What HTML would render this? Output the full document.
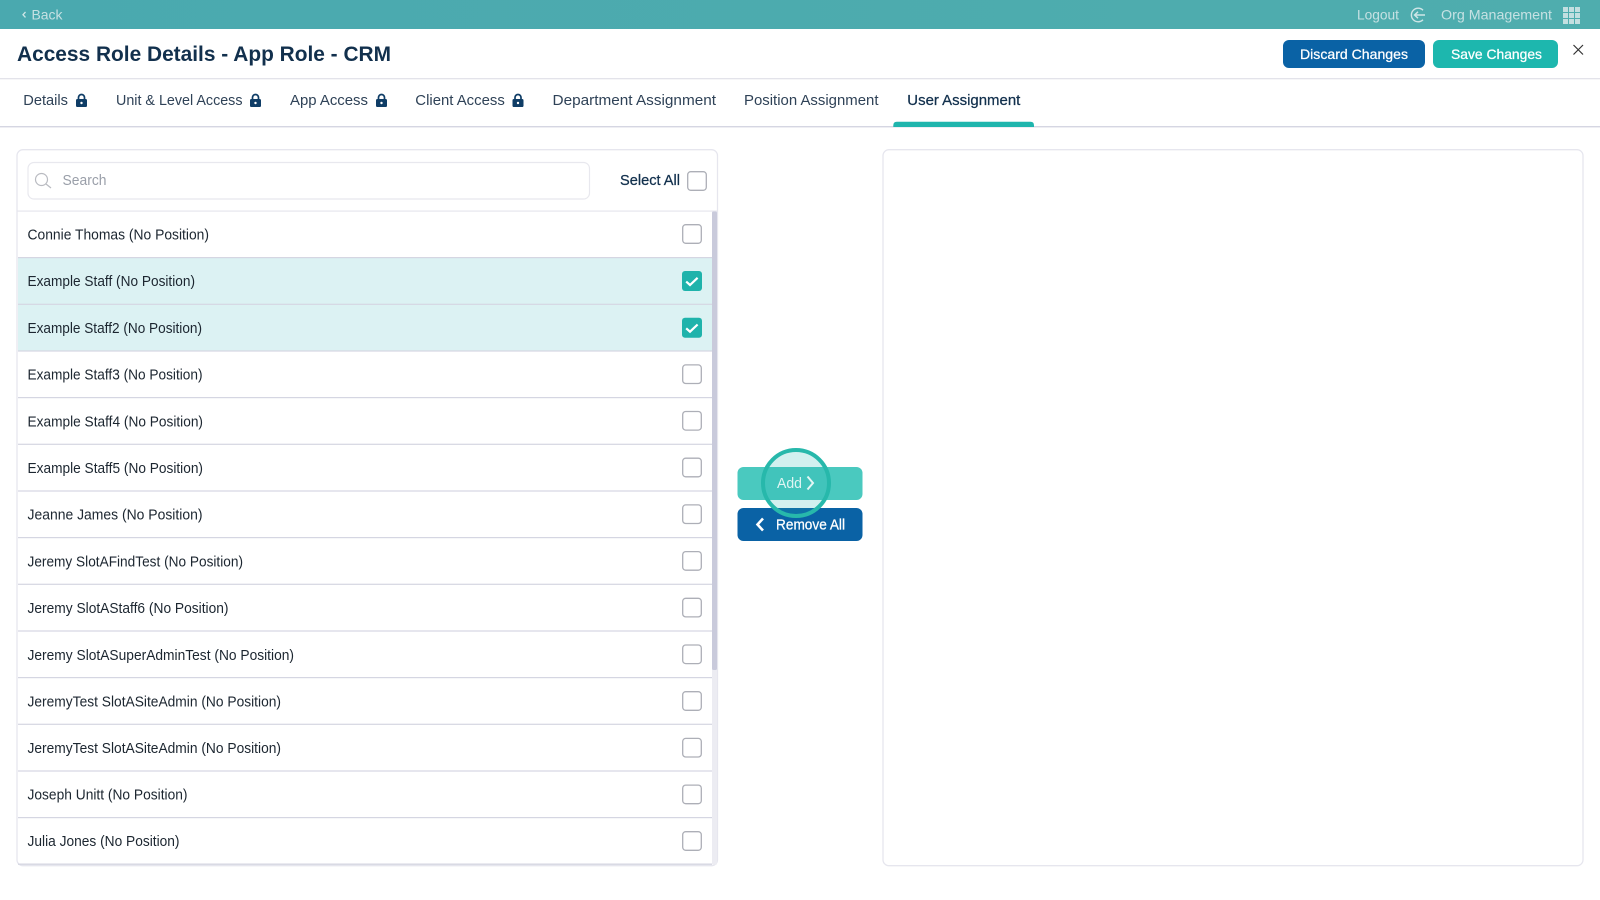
<!DOCTYPE html>
<html><head><meta charset="utf-8"><title>Access Role Details</title>
<style>
html,body{margin:0;padding:0;background:#fff;width:1600px;height:900px;overflow:hidden}
svg{display:block}
text{font-family:"Liberation Sans",sans-serif}
.r{font-size:14.5px;fill:#1c2630}
.t{font-size:15px;fill:#2f4257}
.m{stroke-width:.25}
</style></head><body>
<svg width="1600" height="900" viewBox="0 0 1600 900" xmlns="http://www.w3.org/2000/svg">
<defs>
<linearGradient id="g" x1="0" y1="0" x2="1" y2="0"><stop offset="0" stop-color="#4aa9af"/><stop offset="1" stop-color="#4fadae"/></linearGradient>
<g id="lock"><rect x="0" y="5" width="11" height="8" rx="1.4" fill="#0f3d66"/><path d="M2.5 5.5V3.5a3 3 0 0 1 6 0V5.5" fill="none" stroke="#0f3d66" stroke-width="1.7"/><circle cx="5.5" cy="9" r="1.2" fill="#fff"/></g>
<g id="cb"><rect x=".7" y=".7" width="18.6" height="18.6" rx="3" fill="#fff" stroke="#adafb7" stroke-width="1.3"/></g>
<g id="cc"><rect width="20" height="20" rx="3" fill="#1fb3ab"/><path d="M4.2 10.6 8 14 15.6 6.8" fill="none" stroke="#fff" stroke-width="2.2"/></g>
</defs>

<!-- top bar -->
<rect width="1600" height="29" fill="url(#g)"/>
<path d="M25.5 12 23 14.7 25.5 17.4" fill="none" stroke="#cfe6e7" stroke-width="1.3"/>
<text x="31.5" y="19.3" font-size="14" fill="#c6e1e3" textLength="31" lengthAdjust="spacingAndGlyphs">Back</text>
<text x="1357" y="19.3" font-size="14" fill="#c6e1e3" textLength="42" lengthAdjust="spacingAndGlyphs">Logout</text>
<path d="M1423 10.2A6.8 6.8 0 1 0 1423 19.8" fill="none" stroke="#cfe6e7" stroke-width="1.4"/>
<path d="M1425 15H1414.5M1418 11.8 1414.5 15 1418 18.2" fill="none" stroke="#cfe6e7" stroke-width="1.4"/>
<text x="1441" y="19.3" font-size="14" fill="#c6e1e3" textLength="111" lengthAdjust="spacingAndGlyphs">Org Management</text>
<g fill="#c3dfe0">
<rect x="1563" y="7" width="5" height="5"/><rect x="1569" y="7" width="5" height="5"/><rect x="1575" y="7" width="5" height="5"/>
<rect x="1563" y="13" width="5" height="5"/><rect x="1569" y="13" width="5" height="5"/><rect x="1575" y="13" width="5" height="5"/>
<rect x="1563" y="19" width="5" height="5"/><rect x="1569" y="19" width="5" height="5"/><rect x="1575" y="19" width="5" height="5"/>
</g>

<!-- title -->
<text x="17" y="61" font-size="21" font-weight="700" fill="#12304d" textLength="374" lengthAdjust="spacingAndGlyphs">Access Role Details - App Role - CRM</text>
<rect x="1283" y="40" width="142" height="28" rx="6" fill="#0a62a5"/>
<text x="1300" y="59" font-size="14" fill="#fff" stroke="#fff" class="m" textLength="108" lengthAdjust="spacingAndGlyphs">Discard Changes</text>
<rect x="1433" y="40" width="125" height="28" rx="6" fill="#1db7ae"/>
<text x="1451" y="59" font-size="14" fill="#fff" stroke="#fff" class="m" textLength="91" lengthAdjust="spacingAndGlyphs">Save Changes</text>
<path d="M1573.5 45 1583 54.5M1583 45 1573.5 54.5" stroke="#333" stroke-width="1.2" fill="none"/>
<rect y="78" width="1600" height="1.3" fill="#e3e3ea"/>

<!-- tabs -->
<text class="t" x="23.3" y="105.2" textLength="44.7" lengthAdjust="spacingAndGlyphs">Details</text>
<use href="#lock" x="76" y="94"/>
<text class="t" x="116" y="105.2" textLength="126.5" lengthAdjust="spacingAndGlyphs">Unit &amp; Level Access</text>
<use href="#lock" x="250" y="94"/>
<text class="t" x="290" y="105.2" textLength="78" lengthAdjust="spacingAndGlyphs">App Access</text>
<use href="#lock" x="376" y="94"/>
<text class="t" x="415.3" y="105.2" textLength="89.5" lengthAdjust="spacingAndGlyphs">Client Access</text>
<use href="#lock" x="512.5" y="94"/>
<text class="t" x="552.5" y="105.2" textLength="163.5" lengthAdjust="spacingAndGlyphs">Department Assignment</text>
<text class="t" x="744" y="105.2" textLength="134.5" lengthAdjust="spacingAndGlyphs">Position Assignment</text>
<text x="907.3" y="105.2" font-size="15" fill="#12304d" stroke="#12304d" class="m" textLength="113" lengthAdjust="spacingAndGlyphs">User Assignment</text>
<rect y="126" width="1600" height="1.4" fill="#d5d6e2"/>
<path d="M893.3 127V125.2Q893.3 121.7 896.8 121.7H1030.5Q1034 121.7 1034 125.2V127Z" fill="#1fb5ad"/>

<!-- left panel -->
<rect x="17" y="149.7" width="700.5" height="716" rx="6" fill="#fff" stroke="#e6e6ee" stroke-width="1.3"/>
<rect x="28" y="162.5" width="561.5" height="36.5" rx="6" fill="#fff" stroke="#e8e8ee" stroke-width="1.2"/>
<circle cx="41.5" cy="179.5" r="6" fill="none" stroke="#b9bbc1" stroke-width="1.2"/>
<path d="M46 184 51 188" stroke="#b9bbc1" stroke-width="1.2"/>
<text x="62.5" y="185" font-size="14.5" fill="#9a9fa9" textLength="44" lengthAdjust="spacingAndGlyphs">Search</text>
<text x="620" y="185" font-size="14.5" fill="#12304d" stroke="#12304d" class="m" textLength="60" lengthAdjust="spacingAndGlyphs">Select All</text>
<use href="#cb" x="687" y="171"/>
<rect x="17.5" y="210.5" width="700" height="1.2" fill="#e6e6ee"/>

<!-- selected rows -->
<rect x="18" y="257.5" width="694" height="94" fill="#dcf2f3"/>

<!-- row lines -->
<g fill="#d5d6e2">
<rect x="18" y="257" width="694" height="1.2"/><rect x="18" y="303.7" width="694" height="1.2"/><rect x="18" y="350.4" width="694" height="1.2"/>
<rect x="18" y="397" width="694" height="1.2"/><rect x="18" y="443.7" width="694" height="1.2"/><rect x="18" y="490.4" width="694" height="1.2"/>
<rect x="18" y="537" width="694" height="1.2"/><rect x="18" y="583.7" width="694" height="1.2"/><rect x="18" y="630.4" width="694" height="1.2"/>
<rect x="18" y="677" width="694" height="1.2"/><rect x="18" y="723.7" width="694" height="1.2"/><rect x="18" y="770.4" width="694" height="1.2"/>
<rect x="18" y="817" width="694" height="1.2"/><rect x="18" y="863.5" width="694" height="1.4"/>
</g>

<!-- scrollbar -->
<rect x="712" y="211.5" width="5" height="653" fill="#ececf2"/>
<rect x="712" y="211.5" width="5" height="458.5" rx="1.5" fill="#c9cadb"/>

<!-- rows -->
<text class="r" x="27.5" y="239.5" textLength="181.5" lengthAdjust="spacingAndGlyphs">Connie Thomas (No Position)</text>
<text class="r" x="27.5" y="286.2" textLength="167.5" lengthAdjust="spacingAndGlyphs">Example Staff (No Position)</text>
<text class="r" x="27.5" y="332.9" textLength="174.5" lengthAdjust="spacingAndGlyphs">Example Staff2 (No Position)</text>
<text class="r" x="27.5" y="379.6" textLength="175" lengthAdjust="spacingAndGlyphs">Example Staff3 (No Position)</text>
<text class="r" x="27.5" y="426.3" textLength="175.5" lengthAdjust="spacingAndGlyphs">Example Staff4 (No Position)</text>
<text class="r" x="27.5" y="473" textLength="175.5" lengthAdjust="spacingAndGlyphs">Example Staff5 (No Position)</text>
<text class="r" x="27.5" y="519.7" textLength="175" lengthAdjust="spacingAndGlyphs">Jeanne James (No Position)</text>
<text class="r" x="27.5" y="566.4" textLength="215.5" lengthAdjust="spacingAndGlyphs">Jeremy SlotAFindTest (No Position)</text>
<text class="r" x="27.5" y="613.1" textLength="201" lengthAdjust="spacingAndGlyphs">Jeremy SlotAStaff6 (No Position)</text>
<text class="r" x="27.5" y="659.8" textLength="266.5" lengthAdjust="spacingAndGlyphs">Jeremy SlotASuperAdminTest (No Position)</text>
<text class="r" x="27.5" y="706.5" textLength="253.5" lengthAdjust="spacingAndGlyphs">JeremyTest SlotASiteAdmin (No Position)</text>
<text class="r" x="27.5" y="753.2" textLength="253.5" lengthAdjust="spacingAndGlyphs">JeremyTest SlotASiteAdmin (No Position)</text>
<text class="r" x="27.5" y="799.7" textLength="160" lengthAdjust="spacingAndGlyphs">Joseph Unitt (No Position)</text>
<text class="r" x="27.5" y="846" textLength="152" lengthAdjust="spacingAndGlyphs">Julia Jones (No Position)</text>

<!-- checkboxes -->
<use href="#cb" x="682" y="224"/>
<use href="#cc" x="682" y="271"/>
<use href="#cc" x="682" y="317.7"/>
<use href="#cb" x="682" y="364.2"/>
<use href="#cb" x="682" y="410.8"/>
<use href="#cb" x="682" y="457.5"/>
<use href="#cb" x="682" y="504.2"/>
<use href="#cb" x="682" y="550.9"/>
<use href="#cb" x="682" y="597.6"/>
<use href="#cb" x="682" y="644.3"/>
<use href="#cb" x="682" y="691"/>
<use href="#cb" x="682" y="737.7"/>
<use href="#cb" x="682" y="784.4"/>
<use href="#cb" x="682" y="831"/>

<!-- middle buttons -->
<rect x="737.5" y="508" width="125" height="33" rx="6" fill="#0a62a5"/>
<path d="M763 518.5 757.5 524.5 763 530.5" fill="none" stroke="#fff" stroke-width="2.6"/>
<text x="776" y="529.3" font-size="14.5" fill="#fff" stroke="#fff" class="m" textLength="69" lengthAdjust="spacingAndGlyphs">Remove All</text>
<rect x="737.5" y="467" width="125" height="33" rx="6" fill="#4ac9bf"/>
<circle cx="796" cy="483" r="33" fill="#1fb5ad" fill-opacity=".2" stroke="#27b8ab" stroke-width="4"/>
<text x="777" y="488" font-size="14.5" fill="#dff5f3" textLength="25" lengthAdjust="spacingAndGlyphs">Add</text>
<path d="M807.5 476.5 813 483 807.5 489.5" fill="none" stroke="#e3f6f4" stroke-width="2"/>

<!-- right panel -->
<rect x="883" y="149.7" width="700" height="716" rx="6" fill="#fff" stroke="#e6e6ee" stroke-width="1.3"/>
</svg>
</body></html>
